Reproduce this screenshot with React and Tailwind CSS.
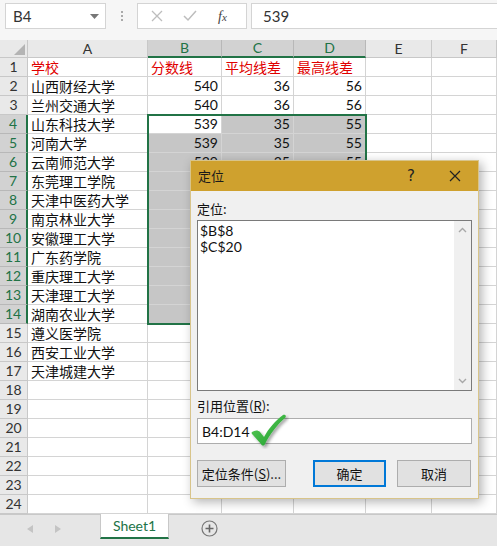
import React from 'react';

const COLS = [
  { id: 'A', w: 'w-[120px]' },
  { id: 'B', w: 'w-[74px]' },
  { id: 'C', w: 'w-[72px]' },
  { id: 'D', w: 'w-[72px]' },
  { id: 'E', w: 'w-[66px]' },
  { id: 'F', w: 'w-[65px]' },
];

const schools = [
  '山西财经大学', '兰州交通大学', '山东科技大学', '河南大学', '云南师范大学', '东莞理工学院',
  '天津中医药大学', '南京林业大学', '安徽理工大学', '广东药学院', '重庆理工大学', '天津理工大学',
  '湖南农业大学', '遵义医学院', '西安工业大学', '天津城建大学',
];

const nums = {
  2: [540, 36, 56],
  3: [540, 36, 56],
  4: [539, 35, 55],
  5: [539, 35, 55],
  6: [539, 35, 55],
  7: [537, 33, 53],
  8: [537, 33, 53],
  9: [535, 31, 51],
  10: [535, 31, 51],
  11: [533, 29, 49],
  12: [533, 29, 49],
  13: [530, 26, 46],
  14: [530, 26, 46],
};

const cjk = "font-['Noto_Sans_CJK_SC',sans-serif]";
const num = "font-['Lato','Noto_Sans',sans-serif]";

function Cell({ row, col }) {
  const inSel = row >= 4 && row <= 14 && ['B', 'C', 'D'].includes(col.id);
  const active = row === 4 && col.id === 'B';
  const bg = inSel && !active ? 'bg-[#c6c6c6]' : 'bg-white';
  let content = null;
  let align = 'justify-start pl-[3px]';
  if (col.id === 'A') {
    if (row === 1) content = <span className="text-[#e00000]">学校</span>;
    else if (schools[row - 2]) content = <span className="text-[#111]">{schools[row - 2]}</span>;
  } else if (['B', 'C', 'D'].includes(col.id)) {
    const heads = { B: '分数线', C: '平均线差', D: '最高线差' };
    if (row === 1) content = <span className="text-[#e00000]">{heads[col.id]}</span>;
    else if (nums[row]) {
      const i = { B: 0, C: 1, D: 2 }[col.id];
      content = <span className={`${num} text-[#111]`}>{nums[row][i]}</span>;
      align = 'justify-end pr-[3px]';
    }
  }
  return (
    <div
      className={`${col.w} h-[19px] shrink-0 flex items-center ${align} border-r border-b border-[#d4d4d4] ${bg} text-[14px] leading-none ${cjk}`}
    >
      {content}
    </div>
  );
}

function Check() {
  return (
    <svg width="40" height="36" viewBox="0 0 40 36" className="absolute left-[58px] top-[252px]">
      <defs>
        <linearGradient id="g" x1="0" y1="0" x2="1" y2="1">
          <stop offset="0" stopColor="#5fd05a" />
          <stop offset="1" stopColor="#1b9a2c" />
        </linearGradient>
        <filter id="s" x="-30%" y="-30%" width="160%" height="160%">
          <feDropShadow dx="2" dy="2" stdDeviation="1.5" floodColor="#000" floodOpacity="0.35" />
        </filter>
      </defs>
      <path
        d="M3 19 C6 17 9 17 11 19 L15 24 C20 15 26 8 34 2 C36 1 38 3 36 5 C28 12 21 21 16 31 C15 33 13 33 12 31 L4 22 C3 21 2 20 3 19 Z"
        fill="url(#g)"
        filter="url(#s)"
      />
    </svg>
  );
}

function Dialog() {
  return (
    <div className="absolute left-[190px] top-[160px] w-[289px] h-[339px] bg-[#f0f0f0] border border-[#d8c48a] shadow-[3px_3px_10px_rgba(0,0,0,0.3)] flex flex-col">
      <div className="h-[30px] bg-[#cfa12e] flex items-center px-[7px] shrink-0">
        <span className={`${cjk} text-[13px] text-[#1a1a1a] flex-1`}>定位</span>
        <span className="text-[15px] text-[#222] font-['DejaVu_Sans',sans-serif] mr-[34px]">?</span>
        <svg width="12" height="12" viewBox="0 0 12 12" className="mr-[10px]">
          <path d="M1 1 L11 11 M11 1 L1 11" stroke="#222" strokeWidth="1.2" />
        </svg>
      </div>
      <div className="flex flex-col px-[6px] pt-[10px] relative">
        <div className={`${cjk} text-[13px] text-[#111] leading-[16px] mb-[3px]`}>定位:</div>
        <div className="h-[171px] border border-[#7a7a7a] bg-white flex">
          <div className={`flex-1 pt-[2px] pl-[2px] ${num} text-[14px] text-[#111] leading-[16px]`}>
            <div>$B$8</div>
            <div>$C$20</div>
          </div>
          <div className="w-[17px] bg-[#f0f0f0] flex flex-col justify-between items-center py-[6px]">
            <svg width="9" height="6" viewBox="0 0 9 6">
              <path d="M1 5 L4.5 1.5 L8 5" stroke="#a8a8a8" strokeWidth="1.4" fill="none" />
            </svg>
            <svg width="9" height="6" viewBox="0 0 9 6">
              <path d="M1 1 L4.5 4.5 L8 1" stroke="#a8a8a8" strokeWidth="1.4" fill="none" />
            </svg>
          </div>
        </div>
        <div className={`${cjk} text-[13px] text-[#111] leading-[16px] mt-[7px] mb-[4px]`}>
          引用位置(<span className="underline">R</span>):
        </div>
        <div className={`h-[26px] border border-[#adadad] bg-white flex items-center pl-[4px] ${num} text-[14px] text-[#111]`}>
          B4:D14
        </div>
        <div className="flex items-center mt-[16px]">
          <div className={`w-[89px] h-[27px] border border-[#adadad] bg-[#e1e1e1] flex items-center justify-center ${cjk} text-[13px] text-[#111]`}>
            定位条件(<span className="underline">S</span>)...
          </div>
          <div className={`ml-[27px] w-[73px] h-[27px] border-2 border-[#0078d7] bg-[#e1e1e1] flex items-center justify-center ${cjk} text-[13px] text-[#111]`}>
            确定
          </div>
          <div className={`ml-[11px] w-[74px] h-[27px] border border-[#adadad] bg-[#e1e1e1] flex items-center justify-center ${cjk} text-[13px] text-[#111]`}>
            取消
          </div>
        </div>
      </div>
      <Check />
    </div>
  );
}

export default function App() {
  const rows = Array.from({ length: 24 }, (_, i) => i + 1);
  return (
    <div className="w-[497px] h-[546px] overflow-hidden bg-white relative flex flex-col select-none">
      {/* Formula bar */}
      <div className="h-[40px] shrink-0 bg-[#f6f6f6] flex items-start pt-[3px] pl-[5px]">
        <div className="w-[101px] h-[26px] bg-white border border-[#d4d4d4] flex items-center pl-[7px] pr-[6px]">
          <span className={`${num} text-[15px] text-[#333] flex-1`}>B4</span>
          <svg width="9" height="5" viewBox="0 0 9 5">
            <path d="M0 0 L9 0 L4.5 5 Z" fill="#777" />
          </svg>
        </div>
        <div className="w-[31px] h-[26px] flex flex-col items-center justify-center gap-[2px]">
          <div className="w-[2px] h-[2px] bg-[#aaa]" />
          <div className="w-[2px] h-[2px] bg-[#aaa]" />
          <div className="w-[2px] h-[2px] bg-[#aaa]" />
        </div>
        <div className="w-[110px] h-[26px] bg-white border border-[#d4d4d4] flex items-center">
          <svg width="12" height="12" viewBox="0 0 12 12" className="ml-[13px]">
            <path d="M1 1 L11 11 M11 1 L1 11" stroke="#bdbdbd" strokeWidth="1.3" />
          </svg>
          <svg width="14" height="12" viewBox="0 0 14 12" className="ml-[20px]">
            <path d="M1 6 L5 10 L13 1" stroke="#bdbdbd" strokeWidth="1.5" fill="none" />
          </svg>
          <span className="ml-[21px] text-[14px] italic text-[#444] font-['Liberation_Serif',serif]">
            f<span className="text-[11px]">x</span>
          </span>
        </div>
        <div className="w-[4px]" />
        <div className="flex-1 h-[26px] bg-white border border-[#d4d4d4] border-r-0 flex items-center pl-[11px]">
          <span className={`${num} text-[15px] text-[#333]`}>539</span>
        </div>
      </div>

      {/* Column headers */}
      <div className="flex h-[18px] shrink-0">
        <div className="w-[28px] shrink-0 bg-[#e9e9e9] border-r border-b border-[#c8c8c8] flex items-end justify-end p-[2px]">
          <svg width="11" height="11" viewBox="0 0 11 11">
            <path d="M11 0 L11 11 L0 11 Z" fill="#b4b4b4" />
          </svg>
        </div>
        {COLS.map((c) => {
          const sel = ['B', 'C', 'D'].includes(c.id);
          return (
            <div
              key={c.id}
              className={`${c.w} shrink-0 flex items-center justify-center border-r text-[14px] leading-none ${num} ${
                sel
                  ? 'bg-[#d2d2d2] border-[#b8b8b8] border-b-2 border-b-[#217346] text-[#217346]'
                  : 'bg-[#e9e9e9] border-[#c8c8c8] border-b border-b-[#c8c8c8] text-[#333]'
              }`}
            >
              {c.id}
            </div>
          );
        })}
      </div>

      {/* Rows */}
      <div className="flex flex-col relative">
        {rows.map((r) => {
          const sel = r >= 4 && r <= 14;
          return (
            <div key={r} className="flex">
              <div
                className={`w-[28px] h-[19px] shrink-0 flex items-center justify-center border-b text-[14px] leading-none ${num} ${
                  sel
                    ? 'bg-[#d2d2d2] border-b-[#b8b8b8] border-r-2 border-r-[#217346] text-[#217346]'
                    : 'bg-[#e9e9e9] border-b-[#c8c8c8] border-r border-r-[#c8c8c8] text-[#333]'
                }`}
              >
                {r}
              </div>
              {COLS.map((c) => (
                <Cell key={c.id} row={r} col={c} />
              ))}
            </div>
          );
        })}
        {/* selection outline B4:D14 */}
        <div className="absolute left-[147px] top-[56px] w-[220px] h-[211px] border-2 border-[#217346] pointer-events-none" />
      </div>

      {/* Sheet tabs */}
      <div className="flex-1 bg-[#e6e6e6] border-t border-[#c8c8c8] flex items-start">
        <div className="w-[100px] h-[28px] flex items-center">
          <svg width="6" height="8" viewBox="0 0 6 8" className="ml-[27px]">
            <path d="M6 0 L6 8 L0 4 Z" fill="#c4c4c4" />
          </svg>
          <svg width="6" height="8" viewBox="0 0 6 8" className="ml-[22px]">
            <path d="M0 0 L0 8 L6 4 Z" fill="#c4c4c4" />
          </svg>
        </div>
        <div className="w-[69px] h-[25px] bg-white border-x border-[#c8c8c8] border-b-2 border-b-[#217346] -mt-px flex items-center justify-center">
          <span className={`${num} text-[14px] text-[#217346]`}>Sheet1</span>
        </div>
        <div className="ml-[32px] mt-[5px]">
          <svg width="17" height="17" viewBox="0 0 17 17">
            <circle cx="8.5" cy="8.5" r="7.5" stroke="#777" strokeWidth="1.2" fill="none" />
            <path d="M8.5 4.5 V12.5 M4.5 8.5 H12.5" stroke="#666" strokeWidth="1.6" />
          </svg>
        </div>
      </div>

      <Dialog />
    </div>
  );
}
